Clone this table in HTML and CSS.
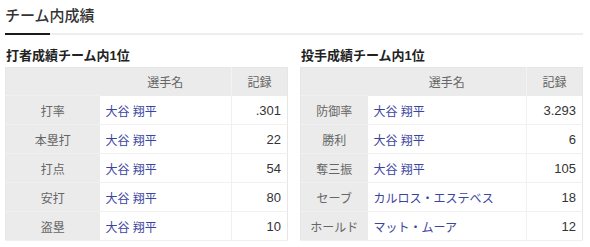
FILE: index.html
```html
<!DOCTYPE html>
<html lang="ja">
<head>
<meta charset="utf-8">
<link rel="stylesheet" href="styles.css">
</head>
<body>
<div class="page">
  <h2 class="title">チーム内成績</h2>
  <div class="tabbar"></div>
  <div class="tables">
    <section class="block">
      <h3 class="heading">打者成績チーム内1位</h3>
      <table class="stats bat">
        <thead>
          <tr><th class="lab"></th><th class="nm">選手名</th><th class="rec">記録</th></tr>
        </thead>
        <tbody>
          <tr><th class="lab">打率</th><td class="name"><a>大谷 翔平</a></td><td class="val">.301</td></tr>
          <tr><th class="lab">本塁打</th><td class="name"><a>大谷 翔平</a></td><td class="val">22</td></tr>
          <tr><th class="lab">打点</th><td class="name"><a>大谷 翔平</a></td><td class="val">54</td></tr>
          <tr><th class="lab">安打</th><td class="name"><a>大谷 翔平</a></td><td class="val">80</td></tr>
          <tr><th class="lab">盗塁</th><td class="name"><a>大谷 翔平</a></td><td class="val">10</td></tr>
        </tbody>
      </table>
    </section>
    <section class="block">
      <h3 class="heading">投手成績チーム内1位</h3>
      <table class="stats pit">
        <thead>
          <tr><th class="lab"></th><th class="nm">選手名</th><th class="rec">記録</th></tr>
        </thead>
        <tbody>
          <tr><th class="lab">防御率</th><td class="name"><a>大谷 翔平</a></td><td class="val">3.293</td></tr>
          <tr><th class="lab">勝利</th><td class="name"><a>大谷 翔平</a></td><td class="val">6</td></tr>
          <tr><th class="lab">奪三振</th><td class="name"><a>大谷 翔平</a></td><td class="val">105</td></tr>
          <tr><th class="lab">セーブ</th><td class="name"><a>カルロス・エステベス</a></td><td class="val">18</td></tr>
          <tr><th class="lab">ホールド</th><td class="name"><a>マット・ムーア</a></td><td class="val">12</td></tr>
        </tbody>
      </table>
    </section>
  </div>
</div>
</body>
</html>
```

FILE: styles.css
```css
* { box-sizing: border-box; }
html, body { margin: 0; padding: 0; background: #fff; }
body {
  font-family: "Liberation Sans", "Noto Sans CJK JP", sans-serif;
  color: #333;
}
.page {
  width: 590px;
  padding: 5px 7px 0 5px;
}
.title {
  margin: 0;
  font-size: 15px;
  font-weight: 500;
  line-height: 22px;
  color: #333;
  padding-bottom: 6px;
}
.tabbar {
  height: 2px;
  background: linear-gradient(to right, #1a1a1a 45px, #eeeeee 45px);
}
.tables {
  display: flex;
  gap: 12px;
  margin-top: 12px;
}
.block { flex: 1; min-width: 0; }
.heading {
  margin: 0 0 2px 1px;
  font-size: 13px;
  font-weight: 700;
  line-height: 18px;
  color: #222;
}
.stats {
  width: 100%;
  border-collapse: collapse;
  table-layout: fixed;
  font-size: 12px;
  border: 1px solid #e6e6e6;
}
.stats th, .stats td {
  height: 29px;
  padding: 0 6px;
  border-bottom: 1px solid #f0f0f0;
  font-weight: 400;
  white-space: nowrap;
}
.stats thead th {
  background: #ebebeb;
  color: #666;
  text-align: center;
  height: 28px;
  border-bottom: 1px solid #ebebeb;
}
.stats thead th.rec { border-left: 1px solid #f3f3f3; }
.stats th.lab {
  background: #ebebeb;
  color: #666;
  text-align: center;
  border-bottom: 1px solid #f0f0f0;
}
.stats td.name { text-align: left; }
.stats td.name a { color: #3b45a0; text-decoration: none; }
.stats td.val {
  text-align: right;
  color: #333;
  font-size: 13px;
  border-left: 1px solid #f0f0f0;
}
.bat .lab { width: 94px; }
.bat .rec { width: 56px; }
.pit .lab { width: 67px; }
.pit .rec { width: 56px; }
```
